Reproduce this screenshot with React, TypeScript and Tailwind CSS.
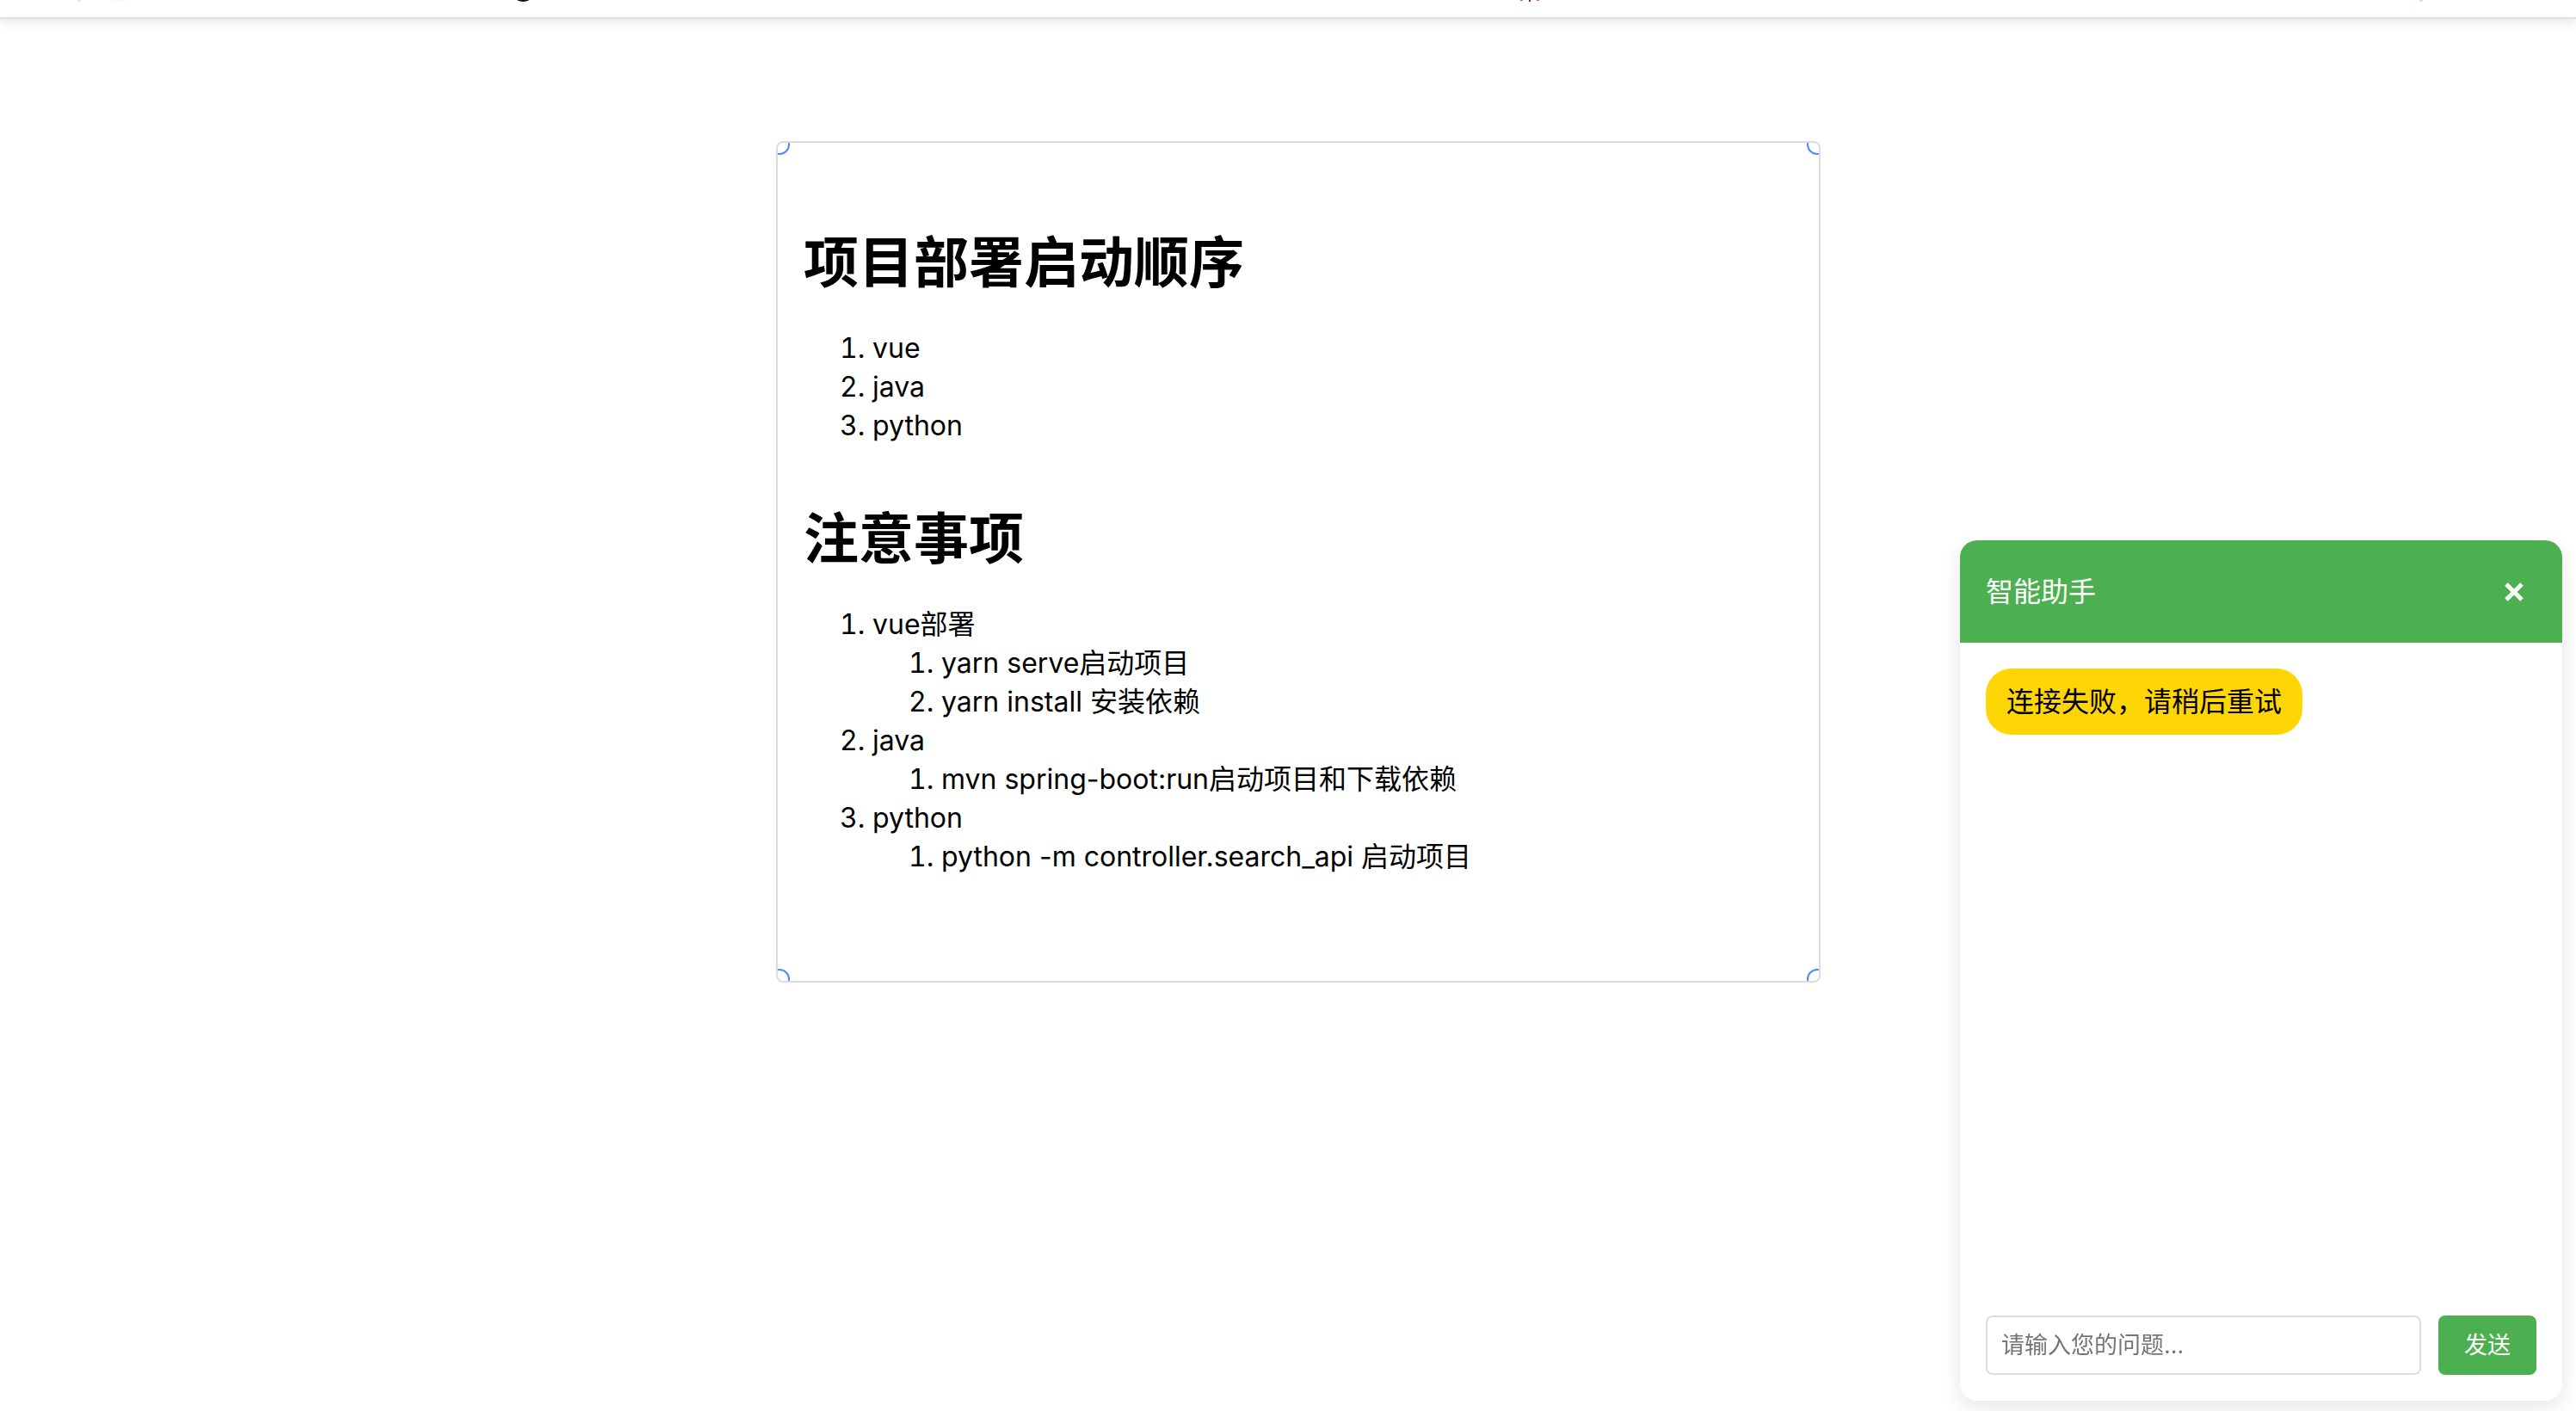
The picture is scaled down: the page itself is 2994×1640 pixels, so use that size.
import type { ReactNode } from "react";

function TopBar() {
  return (
    <header className="h-[22px] border-b-2 border-[#dfe1e0] bg-white shadow-[0_4px_12px_rgba(0,0,0,0.1)]">
      <svg className="block h-1 w-full" aria-hidden="true">
        <ellipse cx="92" cy="0" rx="2" ry="2" fill="#d0dffd" />
        <rect x="131" width="16" height="2" fill="#fafafa" />
        <ellipse cx="608" cy="-3" rx="9" ry="5" fill="#111" />
        <rect x="1767" width="3" height="1" fill="#cf5f70" />
        <rect x="1777" width="2" height="2" fill="#b0182f" />
        <rect x="1786" width="3" height="1" fill="#cf5f70" />
        <ellipse cx="2814" cy="0" rx="2" ry="2" fill="#c5d9fc" />
      </svg>
    </header>
  );
}

function Corner({ place }: { place: string }) {
  return <span className={`absolute size-6 rounded-full border-2 border-[#4f8bf9] ${place}`} />;
}

function Heading({ children }: { children: ReactNode }) {
  return <h1 className="text-[64px] leading-[90px] font-bold">{children}</h1>;
}

function Notes() {
  return (
    <article className="relative w-[1214px] max-w-full overflow-hidden rounded-lg border-2 border-[#dcdcdc] bg-white px-[30px] pt-[94px] pb-[122px] text-[32px] leading-[45px]">
      <Corner place="-top-[10px] -left-[10px]" />
      <Corner place="-top-[10px] -right-[10px]" />
      <Corner place="-bottom-[10px] -left-[10px]" />
      <Corner place="-right-[10px] -bottom-[10px]" />
      <Heading>项目部署启动顺序</Heading>
      <ol className="mt-8 list-decimal pl-20">
        <li>vue</li>
        <li>java</li>
        <li>python</li>
      </ol>
      <div className="mt-16">
        <Heading>注意事项</Heading>
      </div>
      <ol className="mt-8 list-decimal pl-20">
        <li>
          vue部署
          <ol className="list-decimal pl-20">
            <li>yarn serve启动项目</li>
            <li>yarn install 安装依赖</li>
          </ol>
        </li>
        <li>
          java
          <ol className="list-decimal pl-20">
            <li>mvn spring-boot:run启动项目和下载依赖</li>
          </ol>
        </li>
        <li>
          python
          <ol className="list-decimal pl-20">
            <li>python -m controller.search_api 启动项目</li>
          </ol>
        </li>
      </ol>
    </article>
  );
}

function ChatPanel() {
  return (
    <section
      aria-label="智能助手"
      className="fixed right-4 bottom-3 flex h-[1000px] max-h-full w-[700px] max-w-full flex-col overflow-hidden rounded-[20px] bg-white shadow-[0_8px_24px_rgba(0,0,0,0.1)]"
    >
      <div className="flex items-center justify-between bg-[#4caf50] px-[30px] py-[37px] text-[32px] leading-[45px] text-white">
        <h2>智能助手</h2>
        <button type="button" aria-label="关闭" className="px-[15px]">
          <svg viewBox="0 0 22 22" className="size-[22px]" aria-hidden="true">
            <path d="M2 2 20 20M20 2 2 20" stroke="currentColor" strokeWidth="5" />
          </svg>
        </button>
      </div>
      <div className="flex flex-1 flex-col items-start p-[30px]">
        <p className="rounded-[30px] bg-[#ffd605] px-6 py-4 text-[32px] leading-[45px]">连接失败，请稍后重试</p>
      </div>
      <form className="flex gap-5 p-[30px] text-[27px] leading-[33px]" onSubmit={(e) => e.preventDefault()}>
        <input
          type="text"
          aria-label="问题"
          placeholder="请输入您的问题..."
          className="min-w-0 flex-1 rounded-lg border-2 border-[#dddddd] px-4 py-4 placeholder:text-[#757575]"
        />
        <button type="submit" className="rounded-lg bg-[#4caf50] px-[30px] text-white">
          发送
        </button>
      </form>
    </section>
  );
}

export default function App() {
  return (
    <div className="min-h-screen bg-white font-['Inter','Noto_Sans_CJK_SC',sans-serif] text-black">
      <TopBar />
      <main className="flex justify-center pt-[142px] pl-6">
        <Notes />
      </main>
      <ChatPanel />
    </div>
  );
}
